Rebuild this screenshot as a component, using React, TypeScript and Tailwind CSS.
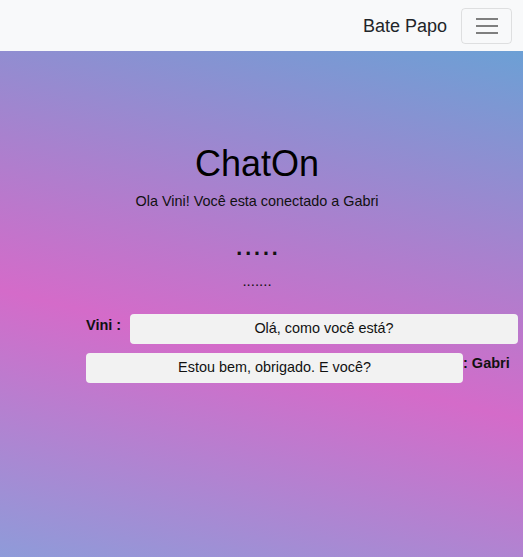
export default function App() {
  return (
    <div className="flex h-[557px] w-[523px] flex-col overflow-hidden font-['Liberation_Sans',Arial,sans-serif] text-[#212529]">
      {/* Navbar */}
      <nav className="flex h-[51px] shrink-0 items-center justify-end bg-[#f8f9fa] pr-[11px]">
        <span className="mr-[14px] text-[18px] leading-none text-[#212529]">Bate Papo</span>
        <button className="flex h-[36px] w-[51px] items-center justify-center rounded-[4px] border border-[rgba(0,0,0,0.1)]">
          <svg width="24" height="20" viewBox="0 0 24 20">
            <path d="M1 3h22M1 10h22M1 17h22" stroke="#7f7f7f" strokeWidth="2" />
          </svg>
        </button>
      </nav>

      {/* Main */}
      <main className="flex-1 bg-[linear-gradient(194deg,#6ca0d5_0%,#d46bc9_58%,#8e9bd9_100%)]">
        <div className="flex flex-col items-center pr-[9px] pt-[90px]">
          <h1 className="text-[36px] leading-[46px] text-black">ChatOn</h1>
          <p className="mt-[4px] text-[14.4px] leading-[20px] text-[#111]">Ola Vini! Você esta conectado a Gabri</p>
          <p className="mt-[18px] text-[32px] leading-[30px] text-[#111]">.....</p>
          <p className="mt-[14px] text-[15px] leading-[16px] text-[#111]">.......</p>
        </div>

        <div className="mt-[25px] flex flex-col gap-[9px] pl-[86px]">
          <div className="flex items-start">
            <span className="w-[44px] shrink-0 pt-[2px] text-[14.5px] font-bold leading-[18px] text-[#111]">Vini :</span>
            <div className="flex h-[30px] w-[388px] shrink-0 items-center justify-center rounded-[4px] bg-[#f2f2f2] text-[14.4px] text-[#111]">
              Olá, como você está?
            </div>
          </div>
          <div className="flex items-start">
            <div className="flex h-[30px] w-[377px] shrink-0 items-center justify-center rounded-[4px] bg-[#f2f2f2] text-[14.4px] text-[#111]">
              Estou bem, obrigado. E você?
            </div>
            <span className="pt-[1px] text-[14.5px] font-bold leading-[18px] text-[#111]">: Gabri</span>
          </div>
        </div>
      </main>
    </div>
  )
}
